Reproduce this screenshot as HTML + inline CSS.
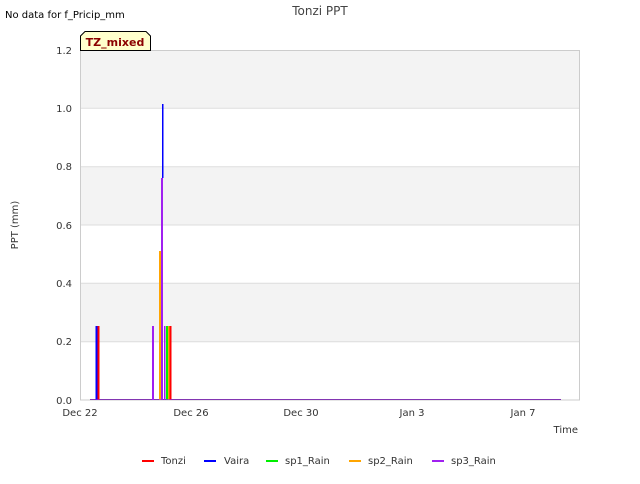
<!DOCTYPE html>
<html><head><style>body{margin:0;background:#fff;font-family:"DejaVu Sans","Liberation Sans",sans-serif}</style></head><body>
<svg width="640" height="480" viewBox="0 0 640 480" xmlns="http://www.w3.org/2000/svg" font-family="DejaVu Sans, Liberation Sans, sans-serif">
<rect width="640" height="480" fill="#fff"/>
<rect x="80" y="50" width="500" height="58.3" fill="#f3f3f3"/>
<rect x="80" y="166.7" width="500" height="58.3" fill="#f3f3f3"/>
<rect x="80" y="283.3" width="500" height="58.3" fill="#f3f3f3"/>
<g stroke="#dddddd" stroke-width="1">
<line x1="80" y1="108.3" x2="580" y2="108.3"/><line x1="80" y1="166.7" x2="580" y2="166.7"/>
<line x1="80" y1="225" x2="580" y2="225"/><line x1="80" y1="283.3" x2="580" y2="283.3"/>
<line x1="80" y1="341.7" x2="580" y2="341.7"/>
</g>
<rect x="80.5" y="50.5" width="499" height="349.5" fill="none" stroke="#cccccc"/>
<g font-size="10" fill="#333" text-anchor="end">
<text x="72" y="404">0.0</text><text x="72" y="345">0.2</text><text x="72" y="287">0.4</text>
<text x="72" y="229">0.6</text><text x="72" y="170">0.8</text><text x="72" y="112">1.0</text><text x="72" y="54">1.2</text>
</g>
<g font-size="10" fill="#333" text-anchor="middle">
<text x="80" y="416">Dec 22</text><text x="191" y="416">Dec 26</text><text x="301" y="416">Dec 30</text>
<text x="412" y="416">Jan 3</text><text x="523" y="416">Jan 7</text>
</g>
<text x="578" y="433" font-size="10" fill="#333" text-anchor="end">Time</text>
<text x="18" y="225" font-size="10" fill="#333" text-anchor="middle" transform="rotate(-90 18 225)">PPT (mm)</text>
<text x="320" y="15" font-size="12" fill="#444" text-anchor="middle">Tonzi PPT</text>
<text x="5" y="18" font-size="10" fill="#000">No data for f_Pricip_mm</text>
<path d="M80.5 50.5 V36 L85 31.5 H146 L150.5 36 V50.5 Z" fill="#ffffcc" stroke="#000"/>
<text x="115" y="46" font-size="11" font-weight="bold" fill="#8b0000" text-anchor="middle">TZ_mixed</text>
<line x1="90" y1="399.5" x2="561" y2="399.5" stroke="#555" stroke-width="1"/>
<rect x="95.5" y="326" width="2" height="74" fill="#0000ff"/>
<rect x="97.5" y="326" width="2" height="74" fill="#ff0000"/>
<rect x="152" y="326" width="2" height="74" fill="#a020f0"/>
<rect x="159" y="251" width="2" height="149" fill="#ffa500"/>
<rect x="161" y="178" width="2" height="222" fill="#a020f0"/>
<rect x="162" y="104" width="1.5" height="74" fill="#0000ff"/>
<rect x="164" y="326" width="1.5" height="74" fill="#a020f0"/>
<rect x="166" y="326" width="2" height="74" fill="#00ee00"/>
<rect x="168" y="326" width="1.5" height="74" fill="#ffa500"/>
<rect x="169.5" y="326" width="2" height="74" fill="#ff0000"/>
<line x1="90" y1="399.5" x2="561" y2="399.5" stroke="#a020f0" stroke-width="1" opacity="0.6"/>
<g font-size="10" fill="#333">
<line x1="142" y1="461" x2="154" y2="461" stroke="#ff0000" stroke-width="2"/><text x="161" y="464">Tonzi</text>
<line x1="204" y1="461" x2="216" y2="461" stroke="#0000ff" stroke-width="2"/><text x="224" y="464">Vaira</text>
<line x1="266" y1="461" x2="278" y2="461" stroke="#00ee00" stroke-width="2"/><text x="285" y="464">sp1_Rain</text>
<line x1="349" y1="461" x2="361" y2="461" stroke="#ffa500" stroke-width="2"/><text x="368" y="464">sp2_Rain</text>
<line x1="432" y1="461" x2="444" y2="461" stroke="#a020f0" stroke-width="2"/><text x="451" y="464">sp3_Rain</text>
</g>
</svg>
</body></html>
